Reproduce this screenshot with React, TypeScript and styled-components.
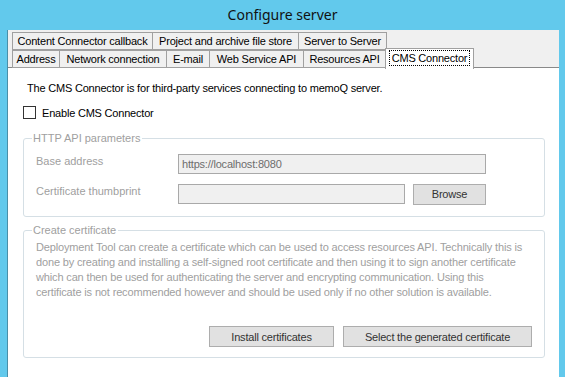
import React from "react";
import styled, { createGlobalStyle } from "styled-components";

const GlobalStyle = createGlobalStyle`
  html, body {
    margin: 0;
    padding: 0;
    background: #62c9ec;
  }
  body {
    font-family: "Liberation Sans", Arial, sans-serif;
    font-size: 11px;
  }
`;

const Window = styled.div`
  width: 565px;
  height: 377px;
  display: flex;
  flex-direction: column;
  background: #62c9ec;
  overflow: hidden;
`;

const TitleBar = styled.div`
  height: 30px;
  display: flex;
  align-items: center;
  justify-content: center;
  font-family: "Noto Sans", "Open Sans", sans-serif;
  font-size: 14px;
  color: #111;
  padding-bottom: 2px;
  box-sizing: border-box;
`;

const Client = styled.div`
  flex: 1;
  margin: 0 6px 0 7px;
  background: #ffffff;
  border-left: 1px solid #4a8fa8;
  display: flex;
  flex-direction: column;
`;

const TabStrip = styled.div`
  background: #f0f0f0;
  height: 38px;
  box-sizing: border-box;
  border-bottom: 1px solid #898989;
  padding: 2px 0 0 4px;
  display: flex;
  flex-direction: column;
`;

const TabRow = styled.div`
  display: flex;
  height: 18px;
`;

const Tab = styled.div<{ $w: number; $active?: boolean }>`
  width: ${({ $w }) => $w}px;
  box-sizing: border-box;
  border: 1px solid #a0a0a0;
  border-right: ${({ $active }) => ($active ? "1px solid #a0a0a0" : "none")};
  border-bottom: ${({ $active }) => ($active ? "none" : "1px solid #a0a0a0")};
  background: ${({ $active }) => ($active ? "#ffffff" : "#f0f0f0")};
  display: flex;
  align-items: center;
  justify-content: center;
  color: #000;
  white-space: nowrap;
  letter-spacing: -0.2px;
  height: ${({ $active }) => ($active ? "21px" : "18px")};
  margin-top: ${({ $active }) => ($active ? "-2px" : "0")};
  position: ${({ $active }) => ($active ? "relative" : "static")};
  z-index: ${({ $active }) => ($active ? 2 : 0)};
  padding-bottom: ${({ $active }) => ($active ? "2px" : "0")};

  &:last-child {
    border-right: 1px solid #a0a0a0;
  }
`;

const FocusLabel = styled.span`
  outline: 1px dotted #000;
  outline-offset: 1px;
  padding: 0 1px;
`;

const Panel = styled.div`
  flex: 1;
  padding: 13px 13px 0 15px;
  display: flex;
  flex-direction: column;
`;

const Intro = styled.div`
  color: #000;
  padding-left: 4px;
  height: 15px;
  line-height: 15px;
  letter-spacing: -0.2px;
`;

const CheckRow = styled.label`
  display: flex;
  align-items: center;
  gap: 6px;
  margin-top: 9px;
  height: 15px;
  color: #000;
  letter-spacing: -0.2px;
`;

const CheckBox = styled.span`
  width: 11px;
  height: 11px;
  border: 1px solid #333;
  background: #fff;
  display: inline-block;
`;

const Group = styled.fieldset<{ $h: number; $top: number }>`
  margin: ${({ $top }) => $top}px 0 0 0;
  padding: 0 12px;
  width: 522px;
  height: ${({ $h }) => $h}px;
  box-sizing: border-box;
  border: 1px solid #d5dfe5;
  border-radius: 3px;
  min-width: 0;
`;

const Legend = styled.legend`
  color: #a0a0a0;
  padding: 0 2px 0 1px;
  margin-left: -4px;
  font-size: 11px;
  line-height: 13px;
`;

const FieldRow = styled.div`
  display: flex;
  align-items: center;
  height: 20px;
  margin-top: 9px;

  & + & {
    margin-top: 10px;
  }
`;

const FieldLabel = styled.div`
  width: 142px;
  color: #a0a0a0;
  margin-top: -6px;
`;

const TextBox = styled.div<{ $w: number }>`
  width: ${({ $w }) => $w}px;
  height: 20px;
  box-sizing: border-box;
  border: 1px solid #a9a9a9;
  background: #f0f0f0;
  color: #6d6d6d;
  display: flex;
  align-items: center;
  padding-left: 3px;
  letter-spacing: -0.2px;
`;

const Button = styled.button<{ $w: number }>`
  width: ${({ $w }) => $w}px;
  height: 21px;
  box-sizing: border-box;
  border: 1px solid #adadad;
  background: #e1e1e1;
  color: #333;
  font-family: "Liberation Sans", Arial, sans-serif;
  font-size: 11px;
  letter-spacing: -0.2px;
  padding: 0;
`;

const Paragraph = styled.p`
  margin: 3px 0 0 0;
  color: #a0a0a0;
  line-height: 15px;
  width: 500px;
  letter-spacing: -0.15px;
  white-space: nowrap;
`;

const ButtonRow = styled.div`
  display: flex;
  justify-content: flex-end;
  gap: 9px;
  margin-top: 26px;
`;

const row1 = [
  { label: "Content Connector callback", w: 140 },
  { label: "Project and archive file store", w: 146 },
  { label: "Server to Server", w: 89 },
];

const row2 = [
  { label: "Address", w: 47 },
  { label: "Network connection", w: 107 },
  { label: "E-mail", w: 43 },
  { label: "Web Service API", w: 94 },
  { label: "Resources API", w: 82 },
];

const paragraphLines = [
  "Deployment Tool can create a certificate which can be used to access resources API. Technically this is",
  "done by creating and installing a self-signed root certificate and then using it to sign another certificate",
  "which can then be used for authenticating the server and encrypting communication. Using this",
  "certificate is not recommended however and should be used only if no other solution is available.",
];

const App = () => {
  return (
    <Window>
      <GlobalStyle />
      <TitleBar>Configure server</TitleBar>
      <Client>
        <TabStrip>
          <TabRow>
            {row1.map((t) => (
              <Tab key={t.label} $w={t.w}>
                {t.label}
              </Tab>
            ))}
          </TabRow>
          <TabRow>
            {row2.map((t) => (
              <Tab key={t.label} $w={t.w}>
                {t.label}
              </Tab>
            ))}
            <Tab $w={89} $active>
              <FocusLabel>CMS Connector</FocusLabel>
            </Tab>
          </TabRow>
        </TabStrip>
        <Panel>
          <Intro>The CMS Connector is for third-party services connecting to memoQ server.</Intro>
          <CheckRow>
            <CheckBox />
            Enable CMS Connector
          </CheckRow>
          <Group $h={85} $top={12}>
            <Legend>HTTP API parameters</Legend>
            <FieldRow>
              <FieldLabel>Base address</FieldLabel>
              <TextBox $w={308}>https://localhost:8080</TextBox>
            </FieldRow>
            <FieldRow>
              <FieldLabel>Certificate thumbprint</FieldLabel>
              <TextBox $w={227}>{""}</TextBox>
              <Button $w={73} style={{ marginLeft: 8 }}>
                Browse
              </Button>
            </FieldRow>
          </Group>
          <Group $h={134} $top={7}>
            <Legend>Create certificate</Legend>
            <Paragraph>
              {paragraphLines.map((line, i) => (
                <React.Fragment key={i}>
                  {line}
                  {i < paragraphLines.length - 1 && <br />}
                </React.Fragment>
              ))}
            </Paragraph>
            <ButtonRow>
              <Button $w={125}>Install certificates</Button>
              <Button $w={189}>Select the generated certificate</Button>
            </ButtonRow>
          </Group>
        </Panel>
      </Client>
    </Window>
  );
};

export default App;
